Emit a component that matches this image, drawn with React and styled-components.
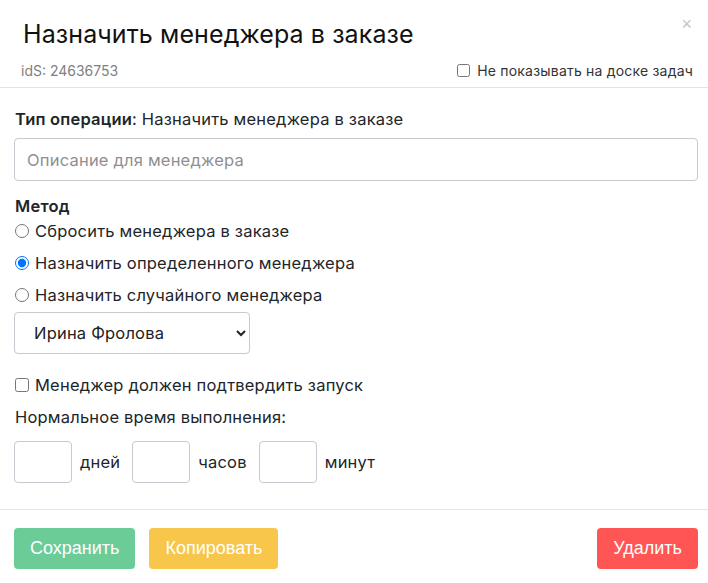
import React from 'react';
import styled, { createGlobalStyle } from 'styled-components';

const GlobalStyle = createGlobalStyle`
  body {
    margin: 0;
    background: #fff;
    font-family: Inter, "Noto Sans", sans-serif;
    color: #212529;
  }
  * { box-sizing: border-box; }
`;

const Modal = styled.div`
  width: 708px;
  height: 583px;
  display: flex;
  flex-direction: column;
  background: #fff;
`;

const Header = styled.div`
  position: relative;
  height: 88px;
  padding: 18px 15px 0 21px;
  border-bottom: 1px solid #e4e4e4;
`;

const Title = styled.h4`
  margin: 0 0 0 2px;
  font-size: 25px;
  font-weight: 400;
  line-height: 32px;
  letter-spacing: 0.1px;
  color: #111;
`;

const Close = styled.span`
  position: absolute;
  top: 14px;
  right: 16px;
  font-size: 18px;
  color: #c4c4c4;
  font-family: "Liberation Sans", sans-serif;
`;

const SubRow = styled.div`
  display: flex;
  justify-content: space-between;
  align-items: center;
  margin-top: 12px;
`;

const Ids = styled.span`
  font-size: 14px;
  color: #808080;
`;

const SmallCheck = styled.label`
  display: flex;
  align-items: center;
  gap: 7px;
  font-size: 14px;
  letter-spacing: 0.2px;
  color: #333;
  input { margin: 0; width: 13px; height: 13px; }
`;

const Body = styled.div`
  flex: 1;
  padding: 19px 10px 0 14px;
  border-bottom: 1px solid #e4e4e4;
  font-size: 16.5px;
  letter-spacing: 0.2px;
`;

const TypeLine = styled.div`
  line-height: 24px;
  margin-left: 1px;
  b { font-weight: 600; }
`;

const TextInput = styled.input`
  display: block;
  width: 100%;
  height: 43px;
  margin-top: 7px;
  padding: 0 12px;
  border: 1px solid #c9c9d1;
  border-radius: 4px;
  font: inherit;
  letter-spacing: inherit;
  &::placeholder { color: #8f8f8f; }
`;

const SectionLabel = styled.div`
  margin-top: 13px;
  font-weight: 600;
  line-height: 24px;
  margin-left: 1px;
`;

const RadioRow = styled.label`
  display: flex;
  align-items: center;
  gap: 6px;
  height: 24px;
  margin-top: ${p => (p.$first ? 1 : 8)}px;
  input { margin: 0 0 0 1px; width: 14px; height: 14px; }
`;

const Select = styled.select`
  display: block;
  width: 236px;
  height: 42px;
  margin-top: 5px;
  padding: 0 10px 0 15px;
  border: 1px solid #c9c9d1;
  border-radius: 4px;
  background: #fff;
  font: inherit;
  letter-spacing: inherit;
  color: #222;
`;

const CheckRow = styled.label`
  display: flex;
  align-items: center;
  gap: 6px;
  margin-top: 21px;
  line-height: 20px;
  input { margin: 0 0 0 1px; width: 14px; height: 14px; }
`;

const Plain = styled.div`
  margin-top: 12px;
  line-height: 20px;
  margin-left: 1px;
`;

const TimeRow = styled.div`
  display: flex;
  align-items: center;
  margin-top: 14px;
`;

const TimeBox = styled.input`
  width: 58px;
  height: 42px;
  border: 1px solid #c9c9d1;
  border-radius: 4px;
  font: inherit;
`;

const Unit = styled.span`
  margin: 0 ${p => p.$gap}px 0 8px;
`;

const Footer = styled.div`
  display: flex;
  gap: 14px;
  height: 73px;
  padding: 18px 10px 0 14px;
`;

const Button = styled.button`
  height: 41px;
  padding: 0 16px;
  border: none;
  border-radius: 4px;
  background: ${p => p.$bg};
  color: #fff;
  font-family: "Liberation Sans", Arial, sans-serif;
  font-size: 18px;
  ${p => p.$right && 'margin-left: auto;'}
`;

export default function App() {
  return (
    <>
      <GlobalStyle />
      <Modal>
        <Header>
          <Title>Назначить менеджера в заказе</Title>
          <Close>×</Close>
          <SubRow>
            <Ids>idS: 24636753</Ids>
            <SmallCheck>
              <input type="checkbox" />
              Не показывать на доске задач
            </SmallCheck>
          </SubRow>
        </Header>
        <Body>
          <TypeLine><b>Тип операции</b>: Назначить менеджера в заказе</TypeLine>
          <TextInput placeholder="Описание для менеджера" />
          <SectionLabel>Метод</SectionLabel>
          <RadioRow $first><input type="radio" name="m" />Сбросить менеджера в заказе</RadioRow>
          <RadioRow><input type="radio" name="m" defaultChecked />Назначить определенного менеджера</RadioRow>
          <RadioRow><input type="radio" name="m" />Назначить случайного менеджера</RadioRow>
          <Select defaultValue="1">
            <option value="1">Ирина Фролова</option>
          </Select>
          <CheckRow><input type="checkbox" />Менеджер должен подтвердить запуск</CheckRow>
          <Plain>Нормальное время выполнения:</Plain>
          <TimeRow>
            <TimeBox />
            <Unit $gap={12}>дней</Unit>
            <TimeBox />
            <Unit $gap={12}>часов</Unit>
            <TimeBox />
            <Unit $gap={0}>минут</Unit>
          </TimeRow>
        </Body>
        <Footer>
          <Button $bg="#6ccc97">Сохранить</Button>
          <Button $bg="#f7c64a">Копировать</Button>
          <Button $bg="#ff5555" $right>Удалить</Button>
        </Footer>
      </Modal>
    </>
  );
}
